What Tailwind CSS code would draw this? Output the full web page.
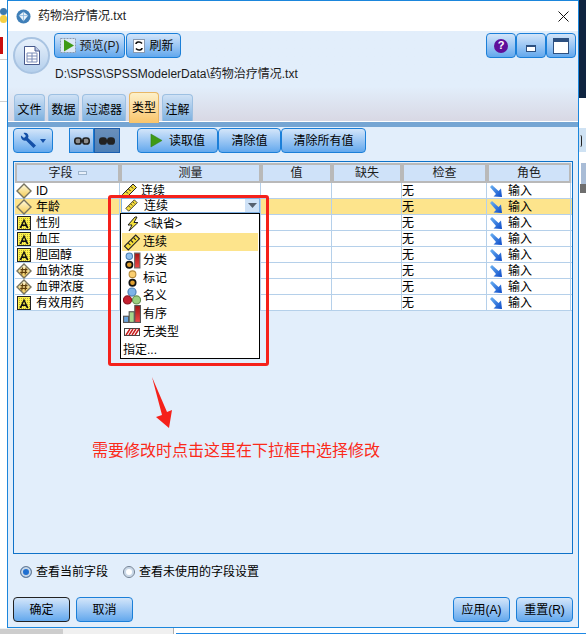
<!DOCTYPE html>
<html lang="zh">
<head>
    <meta charset="UTF-8">
    <title>药物治疗情况.txt</title>
    <script src="https://cdn.jsdelivr.net/npm/@tailwindcss/browser@4"></script>
</head>
<body class="bg-white text-black text-[12px] leading-none font-['Liberation_Sans','Noto_Sans_CJK_SC',sans-serif]">
    <!-- shared icons -->
    <svg class="absolute w-0 h-0">
        <defs>
            <linearGradient id="gd" x1="0" y1="0" x2="0" y2="1"><stop offset="0" stop-color="#fffbe0"/><stop offset="1" stop-color="#f3c94f"/></linearGradient>
            <linearGradient id="ga" x1="0" y1="0" x2="1" y2="1"><stop offset="0" stop-color="#6fb6f5"/><stop offset="1" stop-color="#0a49c8"/></linearGradient>
            <linearGradient id="gr" x1="0" y1="0" x2="0" y2="1"><stop offset="0" stop-color="#a51212"/><stop offset="1" stop-color="#f04a4a"/></linearGradient>
            <pattern id="dots" width="2" height="2" patternUnits="userSpaceOnUse"><rect width="2" height="2" fill="#fff24a"/><rect width="1" height="1" fill="#b8ad3a"/></pattern>
        </defs>
        <symbol id="diamond" viewBox="0 0 16 16">
            <path d="M8 1 15 8 8 15 1 8Z" fill="url(#gd)" stroke="#77735f" stroke-width="1.4"/>
        </symbol>
        <symbol id="hash" viewBox="0 0 16 16">
            <path d="M8 1 15 8 8 15 1 8Z" fill="url(#gd)" stroke="#77735f" stroke-width="1.4"/>
            <path d="M6.6 4.500 5.800 11.500M10 4.500 9.200 11.500M4.500 6.600H11.500M4.200 9.400H11.200" stroke="#5f3f0c" stroke-width="1.2" fill="none"/>
        </symbol>
        <symbol id="letter" viewBox="0 0 14 14">
            <rect x=".5" y=".5" width="13" height="13" fill="url(#dots)" stroke="#222"/>
            <path d="M7 2.500 11.500 12H9.600L8.800 10H5.200L4.400 12H2.500ZM7 5.500 5.800 8.600H8.200Z" fill="#111"/>
        </symbol>
        <symbol id="ruler" viewBox="0 0 16 16">
            <path d="M1 11.500 11.500 1 15 4.500 4.500 15Z" fill="#f5dc3c" stroke="#222"/>
            <path d="M4.500 8.500 6.500 10.500M7 6 9 8M9.500 3.500 11.500 5.500" stroke="#222"/>
        </symbol>
        <symbol id="role" viewBox="0 0 14 14">
            <path d="M1 3 3 1 9.500 7 12 4.500 13 13 4.500 12.500 7 10Z" fill="url(#ga)"/>
        </symbol>
        <symbol id="bolt" viewBox="0 0 16 16">
            <path d="M10 1 3 9H7L4 15 13 6.500H9L12 1Z" fill="#f5e23c" stroke="#222"/>
        </symbol>
        <symbol id="flag" viewBox="0 0 16 16">
            <circle cx="5" cy="4" r="3" fill="#8fc0ee" stroke="#4b7fb5"/>
            <circle cx="5" cy="12" r="3" fill="#e0a030" stroke="#111" stroke-width="1.6"/>
            <rect x="10" y="1" width="5" height="14" fill="url(#gr)" stroke="#666"/>
        </symbol>
        <symbol id="mark" viewBox="0 0 16 16">
            <circle cx="8" cy="4" r="3.200" fill="#fbcf70" stroke="#b58a3a"/>
            <circle cx="8" cy="12" r="3" fill="#e0a030" stroke="#111" stroke-width="1.6"/>
        </symbol>
        <symbol id="nominal" viewBox="0 0 16 16">
            <circle cx="8" cy="4.500" r="3.600" fill="#7db3e8" stroke="#4b7fb5"/>
            <circle cx="4" cy="11.500" r="3.600" fill="#c42030" stroke="#8a1520"/>
            <circle cx="12" cy="11.500" r="3.600" fill="#9ccf7f" stroke="#668f50"/>
        </symbol>
        <symbol id="ordinal" viewBox="0 0 16 16">
            <rect x=".5" y="10" width="4.500" height="5.500" fill="#6aa3dd" stroke="#555"/>
            <rect x="5.500" y="6" width="4.500" height="9.500" fill="#a5d68c" stroke="#555"/>
            <rect x="10.500" y=".5" width="5" height="15" fill="url(#gr)" stroke="#555"/>
        </symbol>
        <symbol id="typeless" viewBox="0 0 16 8">
            <rect x=".5" y=".5" width="15" height="7" fill="#fff" stroke="#444"/>
            <path d="M2 7 6 1M5 7 9 1M8 7 12 1M11 7 15 1" stroke="#c81e1e" stroke-width="1.5"/>
        </symbol>
        <symbol id="play" viewBox="0 0 14 16">
            <path d="M1 1 13 8 1 15Z" fill="#3f9a16" stroke="#2d7a10" stroke-width=".5"/>
        </symbol>
        <symbol id="links" viewBox="0 0 16 8">
            <rect x=".8" y="1" width="6.400" height="6" rx="2.600" fill="#8d8d8d" stroke="#222" stroke-width="1.6"/>
            <rect x="8.800" y="1" width="6.400" height="6" rx="2.600" fill="#8d8d8d" stroke="#222" stroke-width="1.6"/>
            <path d="M6 4H10" stroke="#222" stroke-width="2"/>
        </symbol>
        <symbol id="linksdark" viewBox="0 0 16 8">
            <rect x=".8" y="1" width="6.400" height="6" rx="2.600" fill="#222" stroke="#222" stroke-width="1.6"/>
            <rect x="8.800" y="1" width="6.400" height="6" rx="2.600" fill="#222" stroke="#222" stroke-width="1.6"/>
            <path d="M6 4H10" stroke="#222" stroke-width="2"/>
        </symbol>
    </svg>

    <div class="relative w-[586px] h-[634px] overflow-hidden bg-white">
        <!-- desktop behind the dialog -->
        <div class="absolute left-0 top-[8px] w-[7px] h-[7px] rounded-full bg-[#3d79ad]"></div>
        <div class="absolute left-0 top-[15px] w-[7px] h-[8px] rounded-full bg-[#f6cf45]"></div>
        <div class="absolute left-0 top-[37px] w-[3px] h-[17px] bg-[#c90e0e]"></div>
        <div class="absolute left-0 top-[59px] w-[7px] h-px bg-[#d0d0d0]"></div>
        <div class="absolute left-0 top-[101px] w-[7px] h-px bg-[#d0d0d0]"></div>
        <div class="absolute left-[579px] top-0 w-[7px] h-[98px] bg-[#0f2440]"></div>
        <div class="absolute left-[579px] top-[128px] w-[7px] h-[24px] bg-[#cfe2f3]"></div>
        <div class="absolute left-[580px] top-[135px] w-[2px] h-[12px] rounded-r-full border-r border-[#222]"></div>
        <div class="absolute left-[581px] top-[163px] w-[5px] h-[21px] bg-[#a9bcd6]"></div>
        <div class="absolute left-[580px] top-[184px] w-[6px] h-[9px] bg-[#6e6e6e]"></div>
        <div class="absolute left-0 top-[628px] w-[173px] h-[6px] bg-[#f0f0f0]"></div>
        <div class="absolute left-0 top-[629px] w-[63px] h-[5px] bg-[#cdcdcd]"></div>
        <div class="absolute left-[173px] top-[628px] w-px h-[6px] bg-[#b0b0b0]"></div>
        <div class="absolute left-[176px] top-[633px] w-[410px] h-px bg-[#1e88e5]"></div>

        <!-- dialog -->
        <div class="absolute left-[7px] top-0 w-[572px] h-[628px] border border-[#1b86dc] bg-[#e2eefb] flex flex-col">
            <div class="h-[30px] shrink-0 bg-white flex items-center pl-[8px] pr-[9px]">
                <svg class="w-[15px] h-[15px]" viewBox="0 0 16 16">
                    <circle cx="8" cy="8" r="7.500" fill="#3f7fb8"/>
                    <path d="M8 3 13 7 8 13 3 7Z" fill="#e8f2fb"/>
                    <path d="M3 7H13M8 3V13" stroke="#7fb0d8" stroke-width=".8"/>
                </svg>
                <span class="ml-[7px] text-[#222]">药物治疗情况.txt</span>
                <svg class="ml-auto w-[11px] h-[11px]" viewBox="0 0 11 11"><path d="M.5.5 10.500 10.500M10.500.5.5 10.500" stroke="#111"/></svg>
            </div>

            <!-- header -->
            <div class="h-[90px] shrink-0 bg-linear-to-b from-[#e2eefb] from-[62%] to-[#d8d8e4] pl-[5px] pr-[2px] flex flex-col">
                <div class="flex h-[62px]">
                    <div class="mt-[6px] w-[37px] h-[37px] rounded-full border-2 border-[#a9c4e2] bg-linear-to-b from-[#e8f1fb] to-[#b4cfec] flex items-center justify-center">
                        <svg class="w-[16px] h-[19px]" viewBox="0 0 16 19">
                            <path d="M.5.5H11L15.500 5V18.500H.5Z" fill="#fff" stroke="#47598c"/>
                            <path d="M11 .5V5H15.500" fill="#b9c6e4" stroke="#47598c"/>
                            <path d="M3 7H13V16H3ZM3 10H13M3 13H13M8 7V16" fill="none" stroke="#7c8db8"/>
                        </svg>
                    </div>
                    <div class="ml-[4px] flex-1 flex flex-col pt-[2px]">
                        <div class="flex">
                            <button class="h-[25px] w-[71px] mr-px rounded-[4px] border border-[#1b7fd8] bg-linear-to-b from-[#d3e5f9] to-[#62a8ed] flex items-center justify-center gap-[4px] text-[#1c1c1c]">
                                <svg class="w-[16px] h-[15px]" viewBox="0 0 16 15">
                                    <rect x=".5" y=".5" width="15" height="14" fill="#dce8f5" stroke="#8a9ab0" stroke-dasharray="2 1"/>
                                    <path d="M4 1.500 14 7.500 4 13.500Z" fill="#3f9a16"/>
                                </svg>
                                <span>预览(P)</span>
                            </button>
                            <button class="h-[25px] w-[55px] rounded-[4px] border border-[#1b7fd8] bg-linear-to-b from-[#d3e5f9] to-[#62a8ed] flex items-center justify-center gap-[4px]">
                                <svg class="w-[12px] h-[14px]" viewBox="0 0 12 14">
                                    <rect x=".5" y=".5" width="11" height="13" fill="#fff" stroke="#8a9ab0"/>
                                    <path d="M3 5C3 3 7 2 9 4.500M9 9C9 11 5 12 3 9.500" fill="none" stroke="#111" stroke-width="1.6"/>
                                </svg>
                                <span>刷新</span>
                            </button>
                            <div class="ml-auto flex gap-0">
                                <button class="h-[25px] w-[30px] rounded-[4px] border border-[#1b7fd8] bg-linear-to-b from-[#d3e5f9] to-[#62a8ed] flex items-center justify-center">
                                    <span class="w-[14px] h-[14px] rounded-full bg-[#5f0f9a] text-white text-[11px] font-bold flex items-center justify-center">?</span>
                                </button>
                                <button class="h-[25px] w-[30px] rounded-[4px] border border-[#1b7fd8] bg-linear-to-b from-[#d3e5f9] to-[#62a8ed] flex items-center justify-center">
                                    <span class="mt-[5px] w-[10px] h-[7px] bg-white border border-[#2d5080] border-t-2"></span>
                                </button>
                                <button class="h-[25px] w-[30px] rounded-[4px] border border-[#1b7fd8] bg-linear-to-b from-[#d3e5f9] to-[#62a8ed] flex items-center justify-center">
                                    <span class="w-[16px] h-[16px] bg-white border border-[#2d5080] border-t-[4px]"></span>
                                </button>
                            </div>
                        </div>
                        <div class="mt-[10px] ml-px text-[#1c1c1c]">D:\SPSS\SPSSModelerData\药物治疗情况.txt</div>
                    </div>
                </div>
                <div class="flex items-end gap-[3px] h-[28px] pl-px">
                    <div class="w-[31px] h-[27px] pt-[4px] rounded-t-[4px] border border-b-0 border-[#9dc0e2] bg-linear-to-b from-[#cfe1f5] to-[#7db0df] flex items-center justify-center">文件</div>
                    <div class="w-[31px] h-[27px] pt-[4px] rounded-t-[4px] border border-b-0 border-[#9dc0e2] bg-linear-to-b from-[#cfe1f5] to-[#7db0df] flex items-center justify-center">数据</div>
                    <div class="w-[44px] h-[27px] pt-[4px] rounded-t-[4px] border border-b-0 border-[#9dc0e2] bg-linear-to-b from-[#cfe1f5] to-[#7db0df] flex items-center justify-center">过滤器</div>
                    <div class="relative z-10 w-[30px] h-[31px] -mb-[2px] rounded-t-[4px] border border-b-0 border-[#e8b766] bg-linear-to-b from-[#fdf0c8] to-[#f9c56a] flex items-center justify-center">类型</div>
                    <div class="w-[31px] h-[27px] pt-[4px] rounded-t-[4px] border border-b-0 border-[#9dc0e2] bg-linear-to-b from-[#cfe1f5] to-[#7db0df] flex items-center justify-center">注解</div>
                </div>
            </div>
            <div class="h-px shrink-0 bg-white"></div>
            <div class="h-[5px] shrink-0 bg-[#75a5d3]"></div>

            <!-- tab body -->
            <div class="flex-1 flex flex-col px-[5px]">
                <div class="flex h-[25px] mt-px">
                    <button class="w-[40px] h-[25px] rounded-[4px] border border-[#1b7fd8] bg-linear-to-b from-[#d3e5f9] to-[#62a8ed] flex items-center justify-center gap-[3px]">
                        <svg class="w-[17px] h-[17px]" viewBox="0 0 17 17">
                            <path d="M1 3.500 4 6 6 4 3.500 1C6 0 8.500 1.500 8.500 4.500L8 6 16 13.500 13.500 16 6 8.500C3 9.500 .5 6.500 1 3.500Z" fill="#1450a8"/>
                        </svg>
                        <svg class="w-[6px] h-[4px]" viewBox="0 0 6 4"><path d="M0 0H6L3 4Z" fill="#1450a8"/></svg>
                    </button>
                    <button class="ml-[16px] w-[25px] h-[25px] bg-linear-to-b from-[#cfe1f7] to-[#6fa9e6] border border-[#1b7fd8] flex items-center justify-center">
                        <svg class="w-[16px] h-[8px]"><use href="#links"/></svg>
                    </button>
                    <button class="w-[26px] h-[25px] bg-linear-to-b from-[#6a8fba] to-[#4d7fb6] border border-[#1b5fb0] flex items-center justify-center">
                        <svg class="w-[16px] h-[8px]"><use href="#linksdark"/></svg>
                    </button>
                    <button class="ml-[17px] w-[81px] h-[25px] rounded-[4px] border border-[#1b7fd8] bg-linear-to-b from-[#d3e5f9] to-[#62a8ed] flex items-center justify-center gap-[6px]">
                        <svg class="w-[13px] h-[15px]"><use href="#play"/></svg>
                        <span>读取值</span>
                    </button>
                    <button class="w-[63px] h-[25px] rounded-[4px] border border-[#1b7fd8] bg-linear-to-b from-[#d3e5f9] to-[#62a8ed]">清除值</button>
                    <button class="w-[85px] h-[25px] rounded-[4px] border border-[#1b7fd8] bg-linear-to-b from-[#d3e5f9] to-[#62a8ed]">清除所有值</button>
                </div>

                <!-- field table -->
                <div class="mt-[8px] w-[560px] h-[393px] border border-[#0f72c8] bg-[#e2eefb] pl-px pt-px">
                    <div class="grid grid-cols-[105px_141px_71px_70px_85px_84px] h-[20px] text-[#1c1c1c]">
                        <div class="border-2 border-[#b9b9b9] bg-[#cfe2f9] flex items-center justify-center gap-[5px]">字段<span class="w-[9px] h-[4px] border border-[#9db4cc] bg-[#e8f0fa]"></span></div>
                        <div class="border-2 border-[#b9b9b9] bg-[#cfe2f9] flex items-center justify-center">测量</div>
                        <div class="border-2 border-[#b9b9b9] bg-[#cfe2f9] flex items-center justify-center">值</div>
                        <div class="border-2 border-[#b9b9b9] bg-[#cfe2f9] flex items-center justify-center">缺失</div>
                        <div class="border-2 border-[#b9b9b9] bg-[#cfe2f9] flex items-center justify-center">检查</div>
                        <div class="border-2 border-[#b9b9b9] bg-[#cfe2f9] flex items-center justify-center">角色</div>
                    </div>

                    <div class="grid grid-cols-[105px_141px_71px_70px_85px_84px] h-[16px] bg-white border-b border-[#b5d0ea] [&>div]:flex [&>div]:items-center [&>div]:border-r [&>div]:border-[#b5d0ea]">
                        <div class="pl-px"><svg class="w-[16px] h-[16px]"><use href="#diamond"/></svg><span class="ml-[4px]">ID</span></div>
                        <div class="pl-px"><svg class="w-[17px] h-[16px]"><use href="#ruler"/></svg><span class="ml-[3px]">连续</span></div>
                        <div></div><div></div>
                        <div>无</div>
                        <div class="pl-[2px]"><svg class="w-[14px] h-[14px]"><use href="#role"/></svg><span class="ml-[5px]">输入</span></div>
                    </div>
                    <div class="grid grid-cols-[105px_141px_71px_70px_85px_84px] h-[16px] bg-[#fde48c] border-b border-[#b5d0ea] [&>div]:flex [&>div]:items-center [&>div]:border-r [&>div]:border-[#b5d0ea]">
                        <div class="pl-px"><svg class="w-[16px] h-[16px]"><use href="#diamond"/></svg><span class="ml-[4px]">年龄</span></div>
                        <div></div><div></div><div></div>
                        <div>无</div>
                        <div class="pl-[2px]"><svg class="w-[14px] h-[14px]"><use href="#role"/></svg><span class="ml-[5px]">输入</span></div>
                    </div>
                    <div class="grid grid-cols-[105px_141px_71px_70px_85px_84px] h-[16px] bg-white border-b border-[#b5d0ea] [&>div]:flex [&>div]:items-center [&>div]:border-r [&>div]:border-[#b5d0ea]">
                        <div class="pl-[2px]"><svg class="w-[14px] h-[14px]"><use href="#letter"/></svg><span class="ml-[5px]">性别</span></div>
                        <div></div><div></div><div></div>
                        <div>无</div>
                        <div class="pl-[2px]"><svg class="w-[14px] h-[14px]"><use href="#role"/></svg><span class="ml-[5px]">输入</span></div>
                    </div>
                    <div class="grid grid-cols-[105px_141px_71px_70px_85px_84px] h-[16px] bg-white border-b border-[#b5d0ea] [&>div]:flex [&>div]:items-center [&>div]:border-r [&>div]:border-[#b5d0ea]">
                        <div class="pl-[2px]"><svg class="w-[14px] h-[14px]"><use href="#letter"/></svg><span class="ml-[5px]">血压</span></div>
                        <div></div><div></div><div></div>
                        <div>无</div>
                        <div class="pl-[2px]"><svg class="w-[14px] h-[14px]"><use href="#role"/></svg><span class="ml-[5px]">输入</span></div>
                    </div>
                    <div class="grid grid-cols-[105px_141px_71px_70px_85px_84px] h-[16px] bg-white border-b border-[#b5d0ea] [&>div]:flex [&>div]:items-center [&>div]:border-r [&>div]:border-[#b5d0ea]">
                        <div class="pl-[2px]"><svg class="w-[14px] h-[14px]"><use href="#letter"/></svg><span class="ml-[5px]">胆固醇</span></div>
                        <div></div><div></div><div></div>
                        <div>无</div>
                        <div class="pl-[2px]"><svg class="w-[14px] h-[14px]"><use href="#role"/></svg><span class="ml-[5px]">输入</span></div>
                    </div>
                    <div class="grid grid-cols-[105px_141px_71px_70px_85px_84px] h-[16px] bg-white border-b border-[#b5d0ea] [&>div]:flex [&>div]:items-center [&>div]:border-r [&>div]:border-[#b5d0ea]">
                        <div class="pl-px"><svg class="w-[16px] h-[16px]"><use href="#hash"/></svg><span class="ml-[4px]">血钠浓度</span></div>
                        <div></div><div></div><div></div>
                        <div>无</div>
                        <div class="pl-[2px]"><svg class="w-[14px] h-[14px]"><use href="#role"/></svg><span class="ml-[5px]">输入</span></div>
                    </div>
                    <div class="grid grid-cols-[105px_141px_71px_70px_85px_84px] h-[16px] bg-white border-b border-[#b5d0ea] [&>div]:flex [&>div]:items-center [&>div]:border-r [&>div]:border-[#b5d0ea]">
                        <div class="pl-px"><svg class="w-[16px] h-[16px]"><use href="#hash"/></svg><span class="ml-[4px]">血钾浓度</span></div>
                        <div></div><div></div><div></div>
                        <div>无</div>
                        <div class="pl-[2px]"><svg class="w-[14px] h-[14px]"><use href="#role"/></svg><span class="ml-[5px]">输入</span></div>
                    </div>
                    <div class="grid grid-cols-[105px_141px_71px_70px_85px_84px] h-[16px] bg-white border-b border-[#b5d0ea] [&>div]:flex [&>div]:items-center [&>div]:border-r [&>div]:border-[#b5d0ea]">
                        <div class="pl-[2px]"><svg class="w-[14px] h-[14px]"><use href="#letter"/></svg><span class="ml-[5px]">有效用药</span></div>
                        <div></div><div></div><div></div>
                        <div>无</div>
                        <div class="pl-[2px]"><svg class="w-[14px] h-[14px]"><use href="#role"/></svg><span class="ml-[5px]">输入</span></div>
                    </div>
                </div>

                <!-- radios -->
                <div class="mt-[12px] flex items-center h-[12px] pl-[7px]">
                    <span class="w-[12px] h-[12px] rounded-full border border-[#6f7f92] bg-[#1f6fd0] ring-2 ring-inset ring-[#c9d8e8]"></span>
                    <span class="ml-[4px]">查看当前字段</span>
                    <span class="ml-[15px] w-[12px] h-[12px] rounded-full border border-[#6f7f92] bg-white ring-2 ring-inset ring-[#c9d8e8]"></span>
                    <span class="ml-[4px]">查看未使用的字段设置</span>
                </div>

                <!-- footer buttons -->
                <div class="mt-[19px] w-[560px] flex">
                    <button class="w-[57px] h-[25px] rounded-[4px] border border-[#222] bg-linear-to-b from-[#d3e5f9] to-[#62a8ed]">确定</button>
                    <button class="ml-[6px] w-[57px] h-[25px] rounded-[4px] border border-[#1b7fd8] bg-linear-to-b from-[#d3e5f9] to-[#62a8ed]">取消</button>
                    <button class="ml-auto w-[57px] h-[25px] rounded-[4px] border border-[#1b7fd8] bg-linear-to-b from-[#d3e5f9] to-[#62a8ed]">应用(A)</button>
                    <button class="ml-[6px] w-[57px] h-[25px] rounded-[4px] border border-[#1b7fd8] bg-linear-to-b from-[#d3e5f9] to-[#62a8ed]">重置(R)</button>
                </div>
            </div>
        </div>

        <!-- open measure combo, lies over the table -->
        <div class="absolute left-[121px] top-[198px] w-[139px] h-[15px] bg-white border border-[#7fb2e5] flex items-center pl-px">
            <svg class="w-[17px] h-[13px]"><use href="#ruler"/></svg>
            <span class="ml-[4px]">连续</span>
            <span class="ml-auto w-[14px] h-[13px] bg-[#cfe2f7] flex items-center justify-center">
                <svg class="w-[9px] h-[5px]" viewBox="0 0 9 5"><path d="M0 0H9L4.500 5Z" fill="#55606e"/></svg>
            </span>
        </div>
        <div class="absolute left-[120px] top-[213px] w-[140px] h-[146px] bg-white border border-black pt-px pl-px flex flex-col overflow-hidden">
            <div class="h-[18px] shrink-0 flex items-center pl-[3px]"><svg class="w-[16px] h-[16px]"><use href="#bolt"/></svg><span class="ml-[3px]">&lt;缺省&gt;</span></div>
            <div class="h-[18px] shrink-0 w-[136px] flex items-center pl-[1px] bg-[#fde48c]"><svg class="w-[18px] h-[17px]"><use href="#ruler"/></svg><span class="ml-[2px]">连续</span></div>
            <div class="h-[18px] shrink-0 flex items-center pl-[2px]"><svg class="w-[17px] h-[17px]"><use href="#flag"/></svg><span class="ml-[2px]">分类</span></div>
            <div class="h-[18px] shrink-0 flex items-center pl-[2px]"><svg class="w-[17px] h-[17px]"><use href="#mark"/></svg><span class="ml-[2px]">标记</span></div>
            <div class="h-[18px] shrink-0 flex items-center pl-[1px]"><svg class="w-[18px] h-[18px]"><use href="#nominal"/></svg><span class="ml-[2px]">名义</span></div>
            <div class="h-[18px] shrink-0 flex items-center pl-[1px]"><svg class="w-[18px] h-[18px]"><use href="#ordinal"/></svg><span class="ml-[2px]">有序</span></div>
            <div class="h-[18px] shrink-0 flex items-center pl-[2px]"><svg class="w-[16px] h-[8px]"><use href="#typeless"/></svg><span class="ml-[3px]">无类型</span></div>
            <div class="h-[18px] shrink-0 flex items-center pl-px">指定...</div>
        </div>

        <!-- annotation -->
        <div class="absolute left-[108px] top-[195px] w-[161px] h-[171px] border-[3px] border-[#f5211a] rounded-[3px]"></div>
        <svg class="absolute left-[150px] top-[375px] w-[24px] h-[55px]" viewBox="0 0 24 55">
            <path d="M2 2 17 37 22 35 19 53 6 42 12 40Z" fill="#f5211a"/>
        </svg>
        <div class="absolute left-[92px] top-[443px] text-[16px] text-[#fb2a1a]">需要修改时点击这里在下拉框中选择修改</div>
    </div>
</body>
</html>
